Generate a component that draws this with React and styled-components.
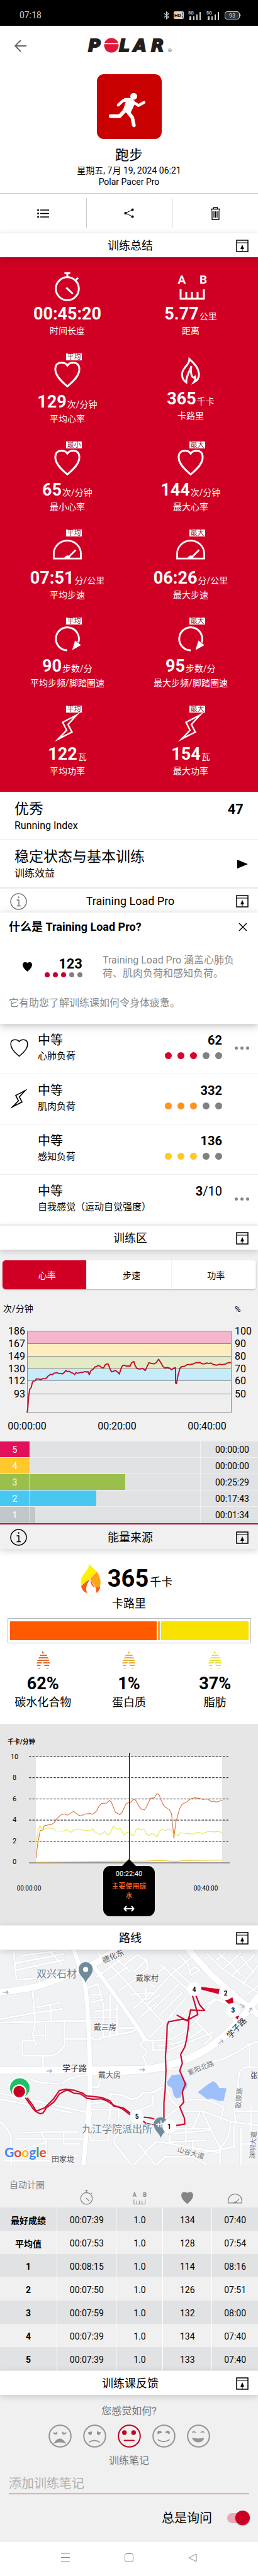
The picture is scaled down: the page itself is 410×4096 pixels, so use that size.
import { useState } from 'react';
import styled, { createGlobalStyle } from 'styled-components';

const GlobalStyle = createGlobalStyle`
  * {
    box-sizing: border-box;
  }

  body {
    margin: 0;
    background: #fff;
    color: #000;
    font-family: Roboto, 'Noto Sans CJK SC', sans-serif;
    font-size: 14px;
  }

  button, input {
    font-family: inherit;
    color: inherit;
  }

  svg {
    display: block;
  }
`;

const IconButton = styled.button`
  display: flex;
  align-items: center;
  justify-content: center;
  padding: 0;
  border: none;
  background: none;
  color: ${({ $color }) => $color || 'inherit'};
  cursor: pointer;
`;

/* ---------- top of the page ---------- */

const StatusBar = styled.div`
  display: flex;
  align-items: center;
  justify-content: space-between;
  height: 41px;
  padding: 7px 27px 0 31px;
  background: #000;
  color: #d0d0d0;
  font-size: 14px;
`;

const StatusIcons = styled.div`
  display: flex;
  align-items: center;
  gap: 7px;
`;

const AppBar = styled.header`
  display: grid;
  grid-template-columns: 40px 1fr 40px;
  align-items: center;
  justify-items: center;
  height: 63px;
  padding: 0 12px;
`;

const Hero = styled.section`
  display: flex;
  flex-direction: column;
  align-items: center;
  padding: 14px 0 9px;
`;

const SportTile = styled.div`
  width: 103px;
  height: 103px;
  margin-bottom: 11px;
  border-radius: 11px;
  background: #c80000;
`;

const SportName = styled.h1`
  margin: 0;
  font-size: 22px;
  font-weight: 400;
  line-height: 30px;
`;

const HeroLine = styled.div`
  line-height: 18px;
`;

const Toolbar = styled.div`
  display: grid;
  grid-template-columns: repeat(3, 1fr);
  height: 63px;
  padding: 7px 0;
  border-top: 1px solid #ccc;
`;

const ToolButton = styled(IconButton)`
  & + & {
    border-left: 1px solid #ccc;
  }
`;

const SectionBar = styled.header`
  position: relative;
  z-index: 1;
  display: grid;
  grid-template-columns: 40px 1fr 40px;
  align-items: center;
  justify-items: center;
  height: ${({ $accent }) => ($accent ? 41 : 39)}px;
  padding: 2px 5px 0 9px;
  border-top: ${({ $accent }) => ($accent ? '2px solid #b5122f' : '1px solid #ececec')};
  background: ${({ $accent }) => ($accent ? '#f0f0f0' : '#fff')};
  box-shadow: ${({ $flat }) => ($flat ? 'none' : '0 3px 10px rgba(0, 0, 0, 0.16)')};
`;

const SectionTitle = styled.h2`
  grid-column: 2;
  margin: 0;
  font-size: 18px;
  font-weight: 400;
  line-height: 24px;
`;

/* ---------- summary ---------- */

const Summary = styled.section`
  display: grid;
  grid-template-columns: 1fr 1fr;
  row-gap: 26px;
  padding: 13px 9px 23px;
  background: #d00024;
  color: #fff;
`;

const Metric = styled.div`
  display: flex;
  flex-direction: column;
  align-items: center;
`;

const MetricIcon = styled.div`
  position: relative;
  width: 48px;
  height: ${({ $short }) => ($short ? 52 : 57)}px;
  margin-bottom: 3px;
`;

const Badge = styled.span`
  position: absolute;
  top: 0;
  right: 1px;
  width: 25px;
  height: 11px;
  background: #fff;
  color: #8c1c38;
  font-size: 11px;
  line-height: 11px;
  text-align: center;
`;

const MetricValue = styled.div`
  display: flex;
  align-items: baseline;
  height: 34px;
  font-size: 27px;
  font-weight: 700;
  line-height: 34px;

  small {
    padding-left: 1px;
    font-size: 14px;
    font-weight: 400;
    line-height: 20px;
  }
`;

const MetricLabel = styled.div`
  line-height: 20px;
`;

/* ---------- running index and training load ---------- */

const InfoRow = styled.section`
  display: flex;
  align-items: center;
  justify-content: space-between;
  padding: 13px ${({ $end }) => $end}px 10px 23px;
  border-bottom: ${({ $line }) => $line}px solid #ececec;

  h3 {
    margin: 0;
    font-size: 23px;
    font-weight: 400;
    line-height: 30px;
  }

  p {
    margin: 0;
    font-size: 16px;
    line-height: 22px;
  }

  strong {
    align-self: flex-start;
    font-size: 22px;
    line-height: 30px;
  }
`;

const LoadIntro = styled.section`
  position: relative;
  z-index: 1;
  padding: 11px 14px 22px;
  background: #fff;
  box-shadow: 0 3px 12px rgba(0, 0, 0, 0.25);
`;

const IntroHead = styled.div`
  display: flex;
  align-items: center;
  justify-content: space-between;
  padding-right: 3px;
  font-size: 18px;
  font-weight: 700;
  line-height: 24px;
`;

const IntroBody = styled.div`
  display: flex;
  align-items: center;
  margin: 30px 0 26px;
  padding: 0 20px 0 22px;
`;

const IntroScore = styled.div`
  display: flex;
  flex-direction: column;
  align-items: flex-end;
  margin: 0 32px 0 20px;
  font-size: 22px;
  font-weight: 700;
  line-height: 26px;
`;

const GrayText = styled.p`
  flex: 1;
  margin: 0;
  color: #8a8a8a;
  font-size: 16px;
  line-height: ${({ $line }) => $line || 22}px;
`;

const Dots = styled.div`
  display: flex;
  gap: ${({ $small }) => ($small ? 5 : 9)}px;
`;

const Dot = styled.span`
  width: ${({ $small }) => ($small ? 8 : 11)}px;
  height: ${({ $small }) => ($small ? 8 : 11)}px;
  border-radius: 50%;
  background: ${({ $color }) => $color};
`;

const LoadRow = styled.div`
  display: grid;
  grid-template-columns: 60px 1fr auto 57px;
  height: 80px;
  padding-top: 13px;
  border-bottom: 1px solid #f0f0f0;
`;

const LoadIcon = styled.div`
  display: flex;
  justify-content: center;
  height: 51px;
  align-items: center;
`;

const LoadName = styled.div`
  font-size: 20px;
  line-height: 26px;

  p {
    margin: 0;
    font-size: 15px;
    line-height: 24px;
  }
`;

const LoadScore = styled.div`
  display: flex;
  flex-direction: column;
  align-items: flex-end;
  gap: 6px;
  font-size: 20px;
  line-height: 26px;
`;

const MoreButton = styled(IconButton)`
  gap: 4px;
  height: 51px;
  padding-left: 5px;

  span {
    width: 5px;
    height: 5px;
    border-radius: 50%;
    background: #858585;
  }
`;

/* ---------- zones ---------- */

const Zones = styled.section`
  padding-top: 17px;
  background: #f0f0f0;
`;

const Tabs = styled.div`
  display: grid;
  grid-template-columns: repeat(3, 1fr);
  height: 46px;
  margin: 0 3px 0 4px;
  overflow: hidden;
  border-radius: 5px;
  background: #fff;
  box-shadow: 0 1px 2px rgba(0, 0, 0, 0.25);
`;

const Tab = styled.button`
  padding: 0 0 0 8px;
  border: none;
  border-right: 1px solid #f0f0f0;
  background: ${({ $active }) => ($active ? '#d00024' : '#fff')};
  color: ${({ $active }) => ($active ? '#fff' : '#000')};
  font-size: 14px;
`;

const Chart = styled.svg`
  width: 100%;
  height: auto;
`;

const ZoneTable = styled.table`
  width: 100%;
  border-collapse: separate;
  border-spacing: 0;
  table-layout: fixed;
  background: #e1e2e4;

  tr {
    height: 26px;
  }

  th, td {
    padding: 0;
    border-bottom: 1px solid #f0f0f0;
  }

  th {
    width: 48px;
    border-right: 1px solid #f0f0f0;
    color: #fff;
    font-weight: 400;
  }

  td:last-child {
    width: 92px;
    padding-right: 14px;
    border-left: 1px solid #f0f0f0;
    text-align: right;
  }
`;

const ZoneLabel = styled.div`
  height: 25px;
  background: ${({ $color }) => $color};
  line-height: 26px;
`;

const ZoneBar = styled.div`
  height: 25px;
  background: ${({ $color }) => $color};
`;

/* ---------- energy ---------- */

const Energy = styled.section`
  padding: 23px 0 22px;
  text-align: center;
`;

const EnergyTotal = styled.div`
  display: flex;
  align-items: center;
  justify-content: center;
  height: 48px;
  margin-bottom: 4px;
  padding-right: 8px;

  strong {
    padding-left: 11px;
    font-size: 38px;
    line-height: 48px;
  }

  span {
    padding: 11px 0 0 2px;
    font-size: 18px;
    line-height: 24px;
  }
`;

const Nutrient = styled.div`
  font-size: 18px;
  line-height: 24px;

  strong {
    display: block;
    margin: 6px 0 2px;
    font-size: 27px;
    line-height: 32px;
  }

  svg {
    margin: 0 auto;
  }
`;

const EnergyBar = styled.div`
  display: flex;
  gap: 2px;
  height: 40px;
  margin: 11px 11px 12px 12px;
  padding: 4px 3px;
  border: 1px solid #b9b9c0;
`;

const EnergyPart = styled.div`
  background: ${({ $color }) => $color};
`;

const Nutrients = styled.div`
  display: grid;
  grid-template-columns: repeat(3, 1fr);
`;

const EnergyChart = styled.section`
  position: relative;
  background: #e6e6e6;
`;

const Tooltip = styled.div`
  position: absolute;
  top: 226px;
  left: 50%;
  width: 82px;
  height: 80px;
  padding: 5px 12px;
  border-radius: 11px;
  background: #000;
  color: #ff6424;
  font-size: 11px;
  font-weight: 500;
  line-height: 15px;
  text-align: center;
  transform: translateX(-50%);

  &::before {
    content: '';
    position: absolute;
    top: -11px;
    left: 30px;
    border: 11px solid transparent;
    border-top-width: 0;
    border-bottom-color: #000;
  }

  time {
    display: block;
    margin-bottom: 5px;
    color: #fff;
    font-weight: 400;
  }

  svg {
    margin: 8px auto 0;
  }
`;

/* ---------- laps ---------- */

const LapTable = styled.table`
  width: 100%;
  border-collapse: separate;
  border-spacing: 0;
  table-layout: fixed;
  background: #f0f0f0;
  text-align: center;

  thead tr {
    height: 68px;
  }

  thead th {
    padding: 0 0 4px;
    color: #858585;
    font-weight: 400;
    vertical-align: bottom;
  }

  thead th:first-child {
    padding: 22px 0 0 15px;
    line-height: 20px;
    text-align: left;
    vertical-align: top;
  }

  thead svg {
    margin: 0 auto;
  }

  tbody tr {
    height: 37px;
  }

  tbody tr:nth-child(odd) {
    background: #e1e2e4;
  }

  tbody th, tbody td {
    padding: 2px 0 0;
  }

  tbody td {
    border-left: 1px solid #fff;
  }
`;

/* ---------- feedback ---------- */

const Feedback = styled.section`
  padding: 15px 14px 26px;
  background: #f0f0f0;
  text-align: center;
`;

const FeedbackLabel = styled.label`
  display: block;
  color: #777;
  font-size: 16px;
  line-height: 22px;
`;

const Faces = styled.div`
  display: flex;
  justify-content: center;
  gap: 18px;
  margin: 10px 0;
`;

const NoteInput = styled.input`
  display: block;
  width: 100%;
  height: 33px;
  margin-top: 9px;
  padding: 0;
  border: none;
  border-bottom: 1px solid #a81c3c;
  outline: none;
  background: none;
  font-size: 20px;

  &::placeholder {
    color: #b0b0b0;
  }
`;

const AskRow = styled.label`
  display: flex;
  align-items: center;
  justify-content: flex-end;
  gap: 24px;
  margin-top: 26px;
  padding-right: 3px;
  font-size: 20px;
  line-height: 24px;
`;

const Switch = styled.input`
  position: relative;
  width: 32px;
  height: 16px;
  margin: 0;
  border-radius: 8px;
  background: ${({ checked }) => (checked ? '#e8aab6' : '#bbb')};
  appearance: none;

  &::before {
    content: '';
    position: absolute;
    top: -4px;
    ${({ checked }) => (checked ? 'right' : 'left')}: -4px;
    width: 23px;
    height: 23px;
    border-radius: 50%;
    background: ${({ checked }) => (checked ? '#cc0024' : '#fff')};
    box-shadow: 0 1px 2px rgba(0, 0, 0, 0.3);
  }
`;

const NavBar = styled.nav`
  display: flex;
  justify-content: center;
  gap: 87px;
  height: 54px;
  padding-bottom: 5px;
`;

/* ---------- icons ---------- */

function Heart({ width, height, viewBox = '12 48 152 152', stroke = 11, filled }) {
  return (
    <svg width={width} height={height} viewBox={viewBox}>
      <path
        d="M88 192C70 176 18 138 18 92C18 62 36 54 52 54C72 54 84 60 88 72C92 60 104 54 124 54C140 54 158 62 158 92C158 138 106 176 88 192Z"
        fill={filled ? 'currentColor' : 'none'}
        stroke="currentColor"
        strokeWidth={stroke}
        strokeLinejoin="round"
      />
    </svg>
  );
}

function Stopwatch({ width, height, viewBox = '12 38 152 172', stroke = 11 }) {
  return (
    <svg width={width} height={height} viewBox={viewBox} fill="none" stroke="currentColor" strokeWidth={stroke}>
      <circle cx="88" cy="136" r="67" />
      <path d="M71 45H105M88 45V68M138 84L151 73M82 130L120 166" />
    </svg>
  );
}

function Ruler({ width, height, viewBox = '-2 6 54 50', stroke = 3 }) {
  return (
    <svg width={width} height={height} viewBox={viewBox}>
      <path d="M8 38V53H45V38M17 42V53M26 42V53M35 42V53" fill="none" stroke="currentColor" strokeWidth={stroke} />
      <g fill="currentColor" fontSize="19" fontWeight="700" textAnchor="middle">
        <text x="10" y="29">A</text>
        <text x="44" y="29">B</text>
      </g>
    </svg>
  );
}

function Gauge({ width, height, viewBox = '309 25 168 112', stroke = 10 }) {
  return (
    <svg width={width} height={height} viewBox={viewBox}>
      <path
        d="M314 132V104A79 76 0 0 1 472 104V132ZM396 128L442 82"
        fill="none"
        stroke="currentColor"
        strokeWidth={stroke}
      />
      <path d="M374 132Q380 114 395 114Q408 116 410 132Z" fill="currentColor" />
    </svg>
  );
}

function Cadence() {
  return (
    <svg width="48" height="57" viewBox="305 475 176 209">
      <path d="M393 666A67 67 0 1 1 457 620" fill="none" stroke="currentColor" strokeWidth="11" />
      <path d="M438 609L473 635L421 665Z" fill="currentColor" />
    </svg>
  );
}

function Bolt({ width, height, viewBox = '318 1026 150 174' }) {
  return (
    <svg width={width} height={height} viewBox={viewBox}>
      <path
        d="M447 1043L366 1085L389 1131L341 1182L420 1142L397 1098Z"
        fill="none"
        stroke="currentColor"
        strokeWidth="9"
        strokeMiterlimit="10"
      />
      <path d="M464 1030L436 1044L440 1052ZM322 1197L352 1181L344 1172Z" fill="currentColor" />
    </svg>
  );
}

function FlameOutline() {
  return (
    <svg width="48" height="52" viewBox="0 0 48 52" fill="none" stroke="currentColor" strokeWidth="3">
      <path d="M17 46C9 41 9 31 13 25C17 19 22 16 22 9C29 15 36 22 37 31C38 38 35 43 29 46C31 43 32 40 31 37C28 40 23 38 25 20C24 27 17 33 17 46Z" />
    </svg>
  );
}

function FlameColor() {
  return (
    <svg width="32" height="48" viewBox="0 0 32 48">
      <path d="M26 13C31 20 33 29 31 36C30 42 28 45 26 47C26 44 25 41 24 38L15 24Z" fill="#ffa514" />
      <path d="M13 0C16 5 23 9 26 13L9 29Q4 34 1 34C-1 26 3 19 8 13C12 8 14 5 13 0Z" fill="#fff200" />
      <path d="M15 25C9 28 4 33 1 36C2 42 6 46 11 47C7 41 9 35 15 25ZM16 25C15 32 19 38 24 38C25 42 25 44 24 47C28 45 31 42 31 37C27 39 22 38 20 34Z" fill="#ff5a14" />
    </svg>
  );
}

function StripedFlame({ color }) {
  const stripes = [
    'M9 0L13 4H9Z',
    'M6 6H16L17 8H5Z',
    'M4 10H18L19 12H3Z',
    'M2 14H20V16H1Z',
    'M1 18H9L8 20H0ZM11 18H21V20H10Z',
    'M1 22H7L6 24H1ZM11 22H20V24H13Z',
    'M2 27H4L6 29H5ZM16 27H19L16 29Z',
  ];
  return (
    <svg width="21" height="30" viewBox="0 0 21 30" fill={color}>
      {stripes.map((d) => (
        <path key={d} d={d} />
      ))}
    </svg>
  );
}

function CollapseButton() {
  return (
    <IconButton type="button" aria-label="收起">
      <svg width="20" height="20" viewBox="0 0 20 20" fill="none" stroke="currentColor">
        <path d="M1 1H19V19H1Z" strokeWidth="1.5" />
        <path d="M1 5H19M10 13V19" />
        <path d="M10 8L13 15H7Z" fill="currentColor" stroke="none" />
      </svg>
    </IconButton>
  );
}

function InfoButton({ color }) {
  return (
    <IconButton type="button" aria-label="信息" $color={color}>
      <svg width="27" height="27" viewBox="0 0 27 27" fill="none" stroke="currentColor" strokeWidth="1.5">
        <circle cx="13.5" cy="13.5" r="12.5" />
        <path d="M10.5 11H14V20M10.5 20.5H17" />
        <circle cx="13.6" cy="6.5" r="1.2" fill="currentColor" stroke="none" />
      </svg>
    </IconButton>
  );
}

function PolarLogo() {
  return (
    <svg width="138" height="38" viewBox="0 -7 138 38">
      <g
        fill="#231f20"
        stroke="#231f20"
        strokeWidth="2"
        fontFamily="'DejaVu Sans', sans-serif"
        fontWeight="700"
        fontStyle="italic"
        fontSize="27"
      >
        <text x="4" y="21">P</text>
        <text x="53" y="21">L</text>
        <text x="76" y="21">A</text>
        <text x="104" y="21">R</text>
      </g>
      <circle cx="41" cy="11" r="11.500" fill="#e0163c" />
      <path d="M29 8.500H53" stroke="#fff" strokeWidth="1.500" />
      <circle cx="134" cy="19" r="2.500" fill="none" stroke="#555" strokeWidth="0.600" />
      <text x="134" y="21" fontSize="4" textAnchor="middle" fill="#555">R</text>
    </svg>
  );
}

function Runner() {
  return (
    <svg width="103" height="103" viewBox="563 432 375 375" fill="none" stroke="#fff" strokeLinecap="round" strokeLinejoin="round">
      <circle cx="776" cy="560" r="20" fill="#fff" stroke="none" />
      <path d="M686 611L714 585H750M766 588L803 613L836 595" strokeWidth="16" />
      <path d="M728 580H756L775 596L746 655L768 683L777 728" strokeWidth="21" />
      <path d="M643 675H694L722 645" strokeWidth="22" />
      <path d="M740 584L766 594L740 650L720 644Z" fill="#fff" strokeWidth="14" />
    </svg>
  );
}

function Signal() {
  return (
    <svg width="22" height="20" viewBox="0 -4 22 20" fill="#d0d0d0">
      <text x="0" y="5" fontSize="7" fontWeight="700">5G</text>
      <path d="M2 8H5V14H2ZM8 8H10V14H8ZM13 5H15V14H13ZM18 1H20V14H18Z" />
    </svg>
  );
}

function Face({ mood }) {
  const eyes = {
    awful: 'M7 12Q11 15 14 11Q15 17 11 16Q8 16 7 12ZM29 12Q25 15 22 11Q21 17 25 16Q28 16 29 12Z',
    bad: 'M8 12Q11 13 13 10Q16 16 11 17Q8 16 8 12ZM28 12Q25 13 23 10Q20 16 25 17Q28 16 28 12Z',
    ok: 'M7 13A3.7 3.7 0 1 0 14.4 13A3.7 3.7 0 1 0 7 13ZM21.6 13A3.7 3.7 0 1 0 29 13A3.7 3.7 0 1 0 21.6 13Z',
    good: 'M8 13A3.5 3.5 0 1 1 15 14Q12 13 9 16ZM28 13A3.5 3.5 0 1 0 21 14Q24 13 27 16Z',
    great: 'M8 14Q9 8 14 12L15 14Q11 11 8 14ZM28 14Q27 8 22 12L21 14Q25 11 28 14Z',
  };
  const mouths = {
    awful: <path d="M10 29Q18 18 26 29Q18 26 10 29Z" fill="currentColor" />,
    bad: <path d="M10 28Q18 23 26 28" fill="none" />,
    ok: <path d="M10.5 25.5H26" fill="none" />,
    good: <path d="M9.5 24.5Q18 30 27 24.5" fill="none" />,
    great: <path d="M9 22Q18 24 27 22Q25 28 18 28Q11 28 9 22Z" fill="currentColor" strokeWidth="1" />,
  };
  return (
    <svg width="37" height="37" viewBox="0 0 37 37" stroke="currentColor" strokeWidth="1.8" strokeLinecap="round">
      <circle cx="18.5" cy="18.5" r="17.3" fill="none" strokeWidth="2" />
      <path d={eyes[mood]} fill="currentColor" stroke="none" />
      {mouths[mood]}
    </svg>
  );
}

/* ---------- data ---------- */

const METRIC_BOX = { width: 48, height: 57 };
const heartIcon = <Heart {...METRIC_BOX} viewBox="0 0 176 209" />;
const gaugeIcon = <Gauge {...METRIC_BOX} viewBox="305 -37 176 209" />;
const boltIcon = <Bolt {...METRIC_BOX} viewBox="305 988 176 209" />;

const METRICS = [
  { icon: <Stopwatch {...METRIC_BOX} viewBox="0 0 176 209" />, value: '00:45:20', label: '时间长度' },
  { icon: <Ruler width={52} height={57} viewBox="0 0 52 57" />, value: '5.77', unit: '公里', label: '距离' },
  { icon: heartIcon, badge: '平均', value: '129', unit: '次/分钟', label: '平均心率' },
  { icon: <FlameOutline />, short: true, value: '365', unit: '千卡', label: '卡路里' },
  { icon: heartIcon, badge: '最小', value: '65', unit: '次/分钟', label: '最小心率' },
  { icon: heartIcon, badge: '最大', value: '144', unit: '次/分钟', label: '最大心率' },
  { icon: gaugeIcon, badge: '平均', value: '07:51', unit: '分/公里', label: '平均步速' },
  { icon: gaugeIcon, badge: '最大', value: '06:26', unit: '分/公里', label: '最大步速' },
  { icon: <Cadence />, badge: '平均', value: '90', unit: '步数/分', label: '平均步频/脚踏圈速' },
  { icon: <Cadence />, badge: '最大', value: '95', unit: '步数/分', label: '最大步频/脚踏圈速' },
  { icon: boltIcon, badge: '平均', value: '122', unit: '瓦', label: '平均功率' },
  { icon: boltIcon, badge: '最大', value: '154', unit: '瓦', label: '最大功率' },
];

const LOADS = [
  { icon: <Heart width={29} height={29} stroke={8} />, name: '心肺负荷', score: '62', color: '#d90429', more: true },
  { icon: <Bolt width={28} height={32} />, name: '肌肉负荷', score: '332', color: '#ff931e' },
  { name: '感知负荷', score: '136', color: '#ffc828' },
  { name: '自我感觉（运动自觉强度）', score: '3', outOf: '/10', more: true },
];

const HR_BANDS = [
  { bpm: 186, pct: 100, y: 66, h: 20, color: '#f4b6cd' },
  { bpm: 167, pct: 90, y: 86, h: 20, color: '#ffecbe' },
  { bpm: 149, pct: 80, y: 106, h: 20, color: '#e2eac6' },
  { bpm: 130, pct: 70, y: 126, h: 19, color: '#c6ebfa' },
  { bpm: 112, pct: 60, y: 145, h: 21, color: '#ededed' },
  { bpm: 93, pct: 50, y: 166, h: 30, color: '#efefef' },
];

const HR_LINE =
  '157,1018 161,1000 166,930 172,885 176,878 182,870 188,842 194,833 203,833 212,821 224,822 236,825 250,820 262,820 270,817 282,803 294,795 304,797 316,788 330,785 340,789 352,790 364,792 372,785 384,772 390,779 402,777 414,785 424,788 434,797 442,785 452,789 466,784 480,784 494,779 504,782 512,779 519,797 528,774 540,766 552,752 562,750 570,743 582,748 592,756 602,757 612,739 622,734 630,736 638,760 648,780 660,777 670,772 684,782 694,793 704,760 712,745 722,742 734,747 746,746 756,748 766,727 778,720 786,745 796,760 808,764 820,763 830,760 844,773 852,757 866,727 878,731 896,734 908,727 922,707 934,725 948,750 960,758 972,755 986,759 998,768 1008,760 1020,756 1021,846 1026,849 1034,805 1046,760 1056,750 1074,748 1088,738 1104,738 1122,735 1140,727 1162,726 1176,734 1190,734 1202,729 1214,732 1226,729 1240,738 1260,742 1276,736 1290,739 1312,735 1326,727 1345,727';

const ZONES = [
  { zone: 5, color: '#e20f5d', width: 0, time: '00:00:00' },
  { zone: 4, color: '#ffc82d', width: 0, time: '00:00:00' },
  { zone: 3, color: '#9bbf4b', width: 56, time: '00:25:29' },
  { zone: 2, color: '#48c7f0', width: 39, time: '00:17:43' },
  { zone: 1, color: '#c2c8c9', width: 3, time: '00:01:34' },
];

const NUTRIENTS = [
  { name: '碳水化合物', pct: 62, color: '#ff5a00', flame: '#e06a2c' },
  { name: '蛋白质', pct: 1, color: '#f5a61e', flame: '#e8ae38' },
  { name: '脂肪', pct: 37, color: '#f7e200', flame: '#e8e23c' },
];

const CARB_LINE =
  '210,848 216,790 222,750 234,688 247,687 258,661 275,657 300,653 315,643 330,620 355,597 378,592 391,600 412,587 428,577 445,590 458,600 474,604 488,593 525,590 538,595 562,575 575,548 590,531 620,529 635,514 646,521 658,550 671,582 695,597 710,583 732,535 745,527 756,527 778,506 790,514 806,545 822,565 840,569 852,550 875,501 898,498 913,473 925,481 938,515 952,543 965,555 985,567 997,590 1004,655 1011,734 1022,640 1045,560 1060,535 1085,523 1106,506 1130,498 1155,501 1180,508 1205,505 1230,520 1245,518 1254,523 1270,520 1293,512';

const FAT_LINE =
  '210,770 215,730 221,690 233,660 246,688 262,680 280,673 294,679 308,677 325,692 360,693 390,684 415,699 428,686 460,680 490,688 527,690 538,678 550,695 570,707 588,711 610,694 622,710 634,716 647,690 659,662 670,675 684,682 696,672 708,693 720,716 737,700 752,697 768,716 780,716 792,683 804,676 820,684 840,681 852,710 866,719 882,705 894,711 912,727 925,700 938,681 964,688 975,681 994,684 1011,715 1022,710 1036,718 1048,702 1090,706 1125,711 1150,698 1175,706 1214,694 1250,697 1270,694 1293,702';

const ROADS_MAJOR = [
  ['M0 427C150 412 230 396 300 365C400 327 460 310 560 255C620 215 670 185 720 160', 38],
  ['M0 882L830 878C1000 860 1130 810 1230 740C1330 670 1400 590 1500 455', 42],
  ['M1095 180L1230 330L1400 480L1500 555', 36],
  ['M545 275C640 410 740 540 810 650L840 700', 24],
  ['M425 170L488 350C515 500 520 700 522 880V1000C515 1150 495 1300 485 1440', 26],
];

const ROADS_MINOR = [
  'M80 200L95 355L230 345L390 310M90 300L370 240M85 260L370 205M300 200L360 270M120 215L320 190M230 345V380',
  'M190 425L205 600L190 680L210 735M0 585L190 550L360 525M0 605L200 600L370 595H510M215 515L350 490M290 500L300 590M375 600V740Q330 800 280 798H130V710H190M195 680H265M265 610V710M375 700H510M250 800V870',
  'M510 400L570 380L600 500V690Q550 720 535 690M530 440H590M535 485L600 470M540 575H680M545 540L680 525M600 640L780 635M600 690L760 660L800 640M640 440V690M680 500V670',
  'M570 200L700 330L850 500L1000 660M560 340L700 240M630 360L740 280M640 200L760 310M690 420L820 330M760 440L900 430M850 400V470M780 310L850 240L860 290L780 340M720 270L800 210L860 250M820 330L900 400',
  'M930 265L1100 420L1180 520M900 330L960 280M860 470L990 330L1060 270L1120 220M900 520L1040 380M930 560L1060 430M960 600L1080 460M850 500L930 440M1000 640L1100 520M870 690L1000 560M780 520L870 440M820 570L910 490M1000 280L1130 400M1040 210L1090 260L1110 330L1160 300Q1130 270 1110 300',
  'M840 710H900L1000 700Q1120 640 1240 480Q1330 440 1370 620M890 710V765H980L1240 660M1140 600L1230 690L1190 730M920 740Q1080 730 1180 640M860 700Q800 720 830 750Q880 780 830 800L850 850M1180 520L1250 465L1300 490',
  'M1200 200L1290 290L1500 430M1260 240L1310 200M1300 290L1400 200M1350 330L1480 210M1410 380L1500 270M1270 200L1360 280L1400 330M1440 440L1500 390M1400 220L1480 320',
  'M530 980H570L590 910M640 1020Q720 1020 760 1050Q810 1050 830 1010Q900 1020 940 980Q980 990 990 1050L1040 1100L960 1160M640 1020V1160M520 1080L640 1060M890 1030V1080Q800 1120 760 1130M530 1110H690V1160',
  'M360 960Q420 910 510 910M180 930Q210 960 345 960M0 1015L430 1110L520 1130M0 1050L420 1130M510 905Q700 910 880 890Q1000 870 1070 880',
  'M0 1180Q70 1240 65 1300V1430M130 1245L455 1240M90 1280H500M240 1245L270 1300V1400M370 1245V1310H460M140 1340L270 1300M110 1380H450M530 1130Q510 1280 530 1290H630V1160M20 1410H290',
  'M740 1210Q660 1260 660 1300L760 1430M840 1360L910 1295L1100 1330L1280 1360M805 1310L900 1430M840 1370L780 1430M910 1430L960 1385H1120L1200 1430',
  'M1080 1060Q1200 1030 1300 1100L1280 1180M1070 1120H1180L1340 1180L1500 1200M1160 1130L1120 1220M960 1220H1220M990 1300L980 1180M1080 1180V1300M1120 1290V1340M1180 1130Q1240 1260 1280 1330V1430M1340 1180Q1340 1280 1280 1330M1180 1360L1350 1330M1010 1250L1230 1230M980 1300L1200 1290',
  'M1380 1000L1390 900Q1400 870 1430 865H1500M1240 830Q1320 820 1450 730L1500 715M1450 730V860M1460 1090V1300M1370 1190L1360 1100M1370 1120H1500M1400 1310H1460M1360 1200V1330M1400 1220V1430',
];

const ROUTE = [
  'M150 1045L175 1080Q200 1125 235 1135L250 1130L270 1100L315 1065L345 1020L390 995L430 1015L470 1020L505 1045L540 1050L590 1048L625 1062L660 1085L710 1105L755 1140',
  'M160 1045L190 1085L210 1120L260 1100L310 1050L345 1000L380 992L430 998L480 1015L500 1030L590 1040L640 1060L660 1090L715 1100L755 1130',
  'M835 1155L870 1158L895 1165M835 1180L850 1192L890 1198',
  'M953 1160V1070L960 1000L965 880L962 800L970 690L972 620L980 600L1060 585L1090 590L1150 558L1140 520L1120 450',
  'M1030 562L1090 595L1100 570L1108 532L1190 535L1160 500L1140 450',
  'M1100 570L1095 630L1085 700L1075 745L1050 790L1060 840L1045 885L1078 960L1060 1010L1068 1068L1045 1095L1072 1160L1075 1195L1025 1203',
];

const MARKERS = [
  [4, 1129, 410],
  [2, 1312, 433],
  [3, 1355, 534],
  [5, 796, 1150],
  [1, 984, 1208],
];

const PLACES = [
  { text: '双兴石材', x: 58, y: 44, size: 16, color: '#6d8794' },
  { text: '九江学院派出所', x: 130, y: 291, size: 16, color: '#6d8794' },
  { text: '戴家村', x: 216, y: 50, size: 12, color: '#555' },
  { text: '戴三房', x: 149, y: 128, size: 12, color: '#555' },
  { text: '戴大房', x: 156, y: 204, size: 12, color: '#555' },
  { text: '学子路', x: 99, y: 193, size: 13, color: '#333' },
  { text: '学子路', x: 366, y: 142, size: 13, color: '#333', rotate: -47 },
  { text: '德化东', x: 165, y: 22, size: 12, color: '#555', rotate: -24 },
  { text: '紫阳北路', x: 300, y: 200, size: 11, color: '#777', rotate: -22 },
  { text: '散原路', x: 382, y: 253, size: 11, color: '#777', rotate: -85 },
  { text: '渊明大道', x: 405, y: 333, size: 11, color: '#777', rotate: -87 },
  { text: '山谷大道', x: 281, y: 321, size: 11, color: '#777', rotate: 16 },
  { text: '张', x: 398, y: 205, size: 12, color: '#333' },
  { text: '田家垅', x: 82, y: 338, size: 12, color: '#555' },
];

const LAPS = [
  ['最好成绩', '00:07:39', '1.0', '134', '07:40'],
  ['平均值', '00:07:53', '1.0', '128', '07:54'],
  ['1', '00:08:15', '1.0', '114', '08:16'],
  ['2', '00:07:50', '1.0', '126', '07:51'],
  ['3', '00:07:59', '1.0', '132', '08:00'],
  ['4', '00:07:39', '1.0', '134', '07:40'],
  ['5', '00:07:39', '1.0', '133', '07:40'],
];

const MOODS = ['awful', 'bad', 'ok', 'good', 'great'];

/* ---------- sections ---------- */

function Section({ title, info, accent, flat }) {
  return (
    <SectionBar $accent={accent} $flat={flat}>
      {info && <InfoButton color={info} />}
      <SectionTitle>{title}</SectionTitle>
      <CollapseButton />
    </SectionBar>
  );
}

function LoadDots({ color, small }) {
  return (
    <Dots $small={small}>
      {[0, 1, 2, 3, 4].map((i) => (
        <Dot key={i} $small={small} $color={i < 3 ? color : '#808080'} />
      ))}
    </Dots>
  );
}

function HeartRateChart() {
  return (
    <Chart viewBox="0 0 410 242">
      <text x="5" y="36" fontSize="14">次/分钟</text>
      <text x="373" y="36" fontSize="13">%</text>
      {HR_BANDS.map((band) => (
        <g key={band.bpm} fontSize="16">
          <rect x="43" y={band.y} width="325" height={band.h} fill={band.color} />
          <path d={`M43 ${band.y + 0.5}H368`} stroke="#888" />
          <text x="40" y={band.y + 6} textAnchor="end">{band.bpm}</text>
          <text x="373" y={band.y + 6}>{band.pct}</text>
        </g>
      ))}
      <path d="M43.5 66V196H367.5V66" fill="none" stroke="#888" />
      <g transform="translate(0 -82) scale(0.27333)">
        <polyline points={HR_LINE} fill="none" stroke="#c01030" strokeWidth="7" strokeLinejoin="round" />
      </g>
      <g fontSize="16" textAnchor="middle">
        <text x="43" y="223">00:00:00</text>
        <text x="186" y="223">00:20:00</text>
        <text x="329" y="223">00:40:00</text>
      </g>
    </Chart>
  );
}

function EnergyUse() {
  return (
    <EnergyChart>
      <Chart viewBox="0 0 410 320">
        <text x="12" y="32" fontSize="10" fontWeight="700">千卡/分钟</text>
        <rect x="57" y="52" width="296" height="169" fill="#fff" />
        {[10, 8, 6, 4, 2].map((n, i) => (
          <path key={n} d={`M46 ${52 + i * 33.7}H363`} stroke="#111" strokeDasharray="3.6 2" />
        ))}
        <g fontSize="11" textAnchor="middle">
          {[10, 8, 6, 4, 2, 0].map((n, i) => (
            <text key={n} x="23" y={56 + i * 33.4}>{n}</text>
          ))}
        </g>
        <path d="M46 221H365" stroke="#999" strokeWidth="2" />
        <g transform="translate(0 -18.6) scale(0.27333)" fill="none" strokeWidth="4" strokeLinejoin="round">
          <polyline points={CARB_LINE} stroke="#d9703c" />
          <polyline points={FAT_LINE} stroke="#e6e650" />
          <polyline points="210,873 400,871 640,867 850,866 930,863 1015,868 1100,863 1293,861" stroke="#ecc030" />
        </g>
        <path d="M205.5 46V222" stroke="#000" />
        <g fontSize="10" textAnchor="middle">
          <text x="46" y="265">00:00:00</text>
          <text x="327" y="265">00:40:00</text>
        </g>
      </Chart>
      <Tooltip>
        <time>00:22:40</time>
        主要使用碳水
        <svg width="18" height="10" viewBox="0 0 18 10" fill="none" stroke="#fff" strokeWidth="2">
          <path d="M2 5H16M5 1L1.5 5L5 9M13 1L16.5 5L13 9" />
        </svg>
      </Tooltip>
    </EnergyChart>
  );
}

function RouteMap() {
  return (
    <Chart viewBox="0 0 410 342">
      <rect width="410" height="342" fill="#f1f2f4" />
      <g transform="translate(0 -49.2) scale(0.27333)" fill="none" strokeLinecap="round" strokeLinejoin="round">
        {ROADS_MINOR.map((d) => (
          <path key={d} d={d} stroke="#dfe1e6" strokeWidth="15" />
        ))}
        {ROADS_MAJOR.map(([d, w]) => (
          <path key={d} d={d} stroke="#dfe1e6" strokeWidth={w + 5} />
        ))}
        {ROADS_MINOR.map((d) => (
          <path key={d} d={d} stroke="#fff" strokeWidth="10" />
        ))}
        {ROADS_MAJOR.map(([d, w]) => (
          <path key={d} d={d} stroke="#fff" strokeWidth={w} />
        ))}
        <path d="M970 950L1000 910L1045 905L1065 935L1090 960L1085 985L1065 1000L1050 1040L1025 1045L1010 1030L1000 985L975 970ZM1150 1010L1200 970L1240 945L1260 960L1275 985L1317 987L1300 1060H1270L1230 1045L1205 1050Z" fill="#9dbffb" />
        <path d="M18 428H48M38 420L48 428L38 436M272 886H302M292 878L302 886L292 894M812 879H842M832 871L842 879L832 887M1272 726L1296 708M1284 706L1296 708L1294 720M1448 544L1464 520M1452 522L1464 520L1466 532M1396 496L1420 514M1408 516L1420 514L1418 502" stroke="#a9adc4" strokeWidth="5" />
        {ROUTE.map((d) => (
          <path key={d} d={d} stroke="#cc0a2e" strokeWidth="8" />
        ))}
        <path d="M1170 397L1276 410V440L1170 412ZM1308 476L1352 458L1358 490L1328 495ZM1366 568L1392 564L1380 588Z" fill="#d40029" />
        <path d="M498 374C492 345 457 330 457 294A41 41 0 0 1 539 294C539 330 504 345 498 374Z" fill="#6f8b99" />
        <circle cx="498" cy="296" r="15" fill="#fff" />
        <path d="M935 1276C929 1248 894 1232 894 1196A41 41 0 0 1 976 1196C976 1232 941 1248 935 1276Z" fill="#6f8b99" />
        <path d="M910 1198H930M920 1190V1210M936 1175V1212M936 1192H950" stroke="#fff" strokeWidth="6" />
        <circle cx="115" cy="985" r="60" fill="#22bf66" stroke="#fff" strokeWidth="6" />
        <circle cx="112" cy="1006" r="38" fill="#cc0024" stroke="#fff" strokeWidth="8" />
        {MARKERS.map(([n, x, y]) => (
          <circle key={n} cx={x} cy={y} r="40" fill="#fff" />
        ))}
      </g>
      <g fontSize="10" fontWeight="700" textAnchor="middle">
        {MARKERS.map(([n, x, y]) => (
          <text key={n} x={x * 0.27333} y={y * 0.27333 - 45.5}>{n}</text>
        ))}
      </g>
      <g paintOrder="stroke" stroke="#f8f8fa" strokeWidth="2">
        {PLACES.map((p) => (
          <text
            key={p.text + p.x}
            x={p.x}
            y={p.y}
            fontSize={p.size}
            fill={p.color}
            transform={p.rotate ? `rotate(${p.rotate} ${p.x} ${p.y})` : undefined}
          >
            {p.text}
          </text>
        ))}
        <text x="7" y="330" fontSize="21" fontFamily="Lato, sans-serif" fontWeight="700">
          <tspan fill="#4285f4">G</tspan>
          <tspan fill="#ea4335">o</tspan>
          <tspan fill="#fbbc05">o</tspan>
          <tspan fill="#4285f4">g</tspan>
          <tspan fill="#34a853">l</tspan>
          <tspan fill="#ea4335">e</tspan>
        </text>
      </g>
    </Chart>
  );
}

function App() {
  const [tab, setTab] = useState('心率');
  const [mood, setMood] = useState('ok');
  const [alwaysAsk, setAlwaysAsk] = useState(true);

  return (
    <>
      <GlobalStyle />
      <StatusBar>
        <span>07:18</span>
        <StatusIcons>
          <svg width="9" height="13" viewBox="0 0 9 13" fill="none" stroke="#d0d0d0" strokeWidth="1.2">
            <path d="M1 3.5L8 9L4.5 12V1L8 4L1 9.5" />
          </svg>
          <svg width="16" height="12" viewBox="0 0 16 12">
            <rect width="16" height="12" rx="2" fill="#d0d0d0" />
            <text x="1" y="9" fontSize="8" fontWeight="700">HD</text>
            <path d="M14 2V5M14 7V10" stroke="#000" />
          </svg>
          <Signal />
          <Signal />
          <svg width="26" height="13" viewBox="0 0 26 13">
            <rect x="0.5" y="0.5" width="23" height="12" rx="3.5" fill="#333" stroke="#d0d0d0" />
            <path d="M25 5V8" stroke="#d0d0d0" />
            <text x="12" y="10" fontSize="9" fill="#d0d0d0" textAnchor="middle">93</text>
          </svg>
        </StatusIcons>
      </StatusBar>

      <AppBar>
        <IconButton type="button" aria-label="返回" $color="#666">
          <svg width="20" height="20" viewBox="0 0 20 20" fill="none" stroke="currentColor" strokeWidth="1.8">
            <path d="M20 10H2M11 1L2 10L11 19" />
          </svg>
        </IconButton>
        <PolarLogo />
      </AppBar>

      <Hero>
        <SportTile>
          <Runner />
        </SportTile>
        <SportName>跑步</SportName>
        <HeroLine>星期五, 7月 19, 2024 06:21</HeroLine>
        <HeroLine>Polar Pacer Pro</HeroLine>
      </Hero>

      <Toolbar>
        <ToolButton type="button" aria-label="列表">
          <svg width="19" height="15" viewBox="0 0 19 15" stroke="currentColor">
            <path d="M5 2H19M5 7.5H19M5 13H19" strokeWidth="1.4" />
            <path d="M1.5 2H1.6M1.5 7.5H1.6M1.5 13H1.6" strokeWidth="2.8" strokeLinecap="round" />
          </svg>
        </ToolButton>
        <ToolButton type="button" aria-label="分享">
          <svg width="16" height="16" viewBox="0 0 16 16" stroke="currentColor">
            <path d="M14 2.5L2 8L14 13.5" fill="none" />
            <path d="M13.5 2.5H13.6M2.4 8H2.5M13.5 13.5H13.6" strokeWidth="4" strokeLinecap="round" />
          </svg>
        </ToolButton>
        <ToolButton type="button" aria-label="删除">
          <svg width="15" height="21" viewBox="0 0 15 21" fill="none" stroke="currentColor" strokeWidth="1.3">
            <path d="M0.5 6V3.5H14.5V6M4.5 3.5V1H10.5V3.5M2 6V20H13V6M5 7V17M7.5 7V17M10 7V17" />
          </svg>
        </ToolButton>
      </Toolbar>

      <Section title="训练总结" />
      <Summary>
        {METRICS.map((m) => (
          <Metric key={m.label}>
            <MetricIcon $short={m.short}>
              {m.icon}
              {m.badge && <Badge>{m.badge}</Badge>}
            </MetricIcon>
            <MetricValue>
              {m.value}
              {m.unit && <small>{m.unit}</small>}
            </MetricValue>
            <MetricLabel>{m.label}</MetricLabel>
          </Metric>
        ))}
      </Summary>

      <InfoRow $line={1} $end={23}>
        <div>
          <h3>优秀</h3>
          <p>Running Index</p>
        </div>
        <strong>47</strong>
      </InfoRow>
      <InfoRow $line={2} $end={16}>
        <div>
          <h3>稳定状态与基本训练</h3>
          <p>训练效益</p>
        </div>
        <IconButton type="button" aria-label="训练效益">
          <svg width="17" height="14" viewBox="0 0 17 14">
            <path d="M0 0L17 7L0 14Z" />
          </svg>
        </IconButton>
      </InfoRow>

      <Section title="Training Load Pro" info="#777" flat />
      <LoadIntro>
        <IntroHead>
          什么是 Training Load Pro?
          <IconButton type="button" aria-label="关闭">
            <svg width="14" height="14" viewBox="0 0 14 14" stroke="currentColor" strokeWidth="1.5">
              <path d="M1 1L13 13M13 1L1 13" />
            </svg>
          </IconButton>
        </IntroHead>
        <IntroBody>
          <Heart width={15} height={15} filled />
          <IntroScore>
            123
            <LoadDots small color="#c8002d" />
          </IntroScore>
          <GrayText $line={21}>Training Load Pro 涵盖心肺负荷、肌肉负荷和感知负荷。</GrayText>
        </IntroBody>
        <GrayText>它有助您了解训练课如何令身体疲惫。</GrayText>
      </LoadIntro>

      {LOADS.map((load) => (
        <LoadRow key={load.name}>
          <LoadIcon>{load.icon}</LoadIcon>
          <LoadName>
            中等
            <p>{load.name}</p>
          </LoadName>
          <LoadScore>
            <div>
              <strong>{load.score}</strong>
              {load.outOf}
            </div>
            {load.color && <LoadDots color={load.color} />}
          </LoadScore>
          {load.more && (
            <MoreButton type="button" aria-label="更多">
              <span />
              <span />
              <span />
            </MoreButton>
          )}
        </LoadRow>
      ))}

      <Section title="训练区" />
      <Zones>
        <Tabs>
          {['心率', '步速', '功率'].map((name) => (
            <Tab key={name} type="button" $active={tab === name} onClick={() => setTab(name)}>
              {name}
            </Tab>
          ))}
        </Tabs>
        <HeartRateChart />
        <ZoneTable>
          <tbody>
            {ZONES.map((z) => (
              <tr key={z.zone}>
                <th scope="row">
                  <ZoneLabel $color={z.color}>{z.zone}</ZoneLabel>
                </th>
                <td>
                  <ZoneBar $color={z.color} style={{ width: `${z.width}%` }} />
                </td>
                <td>{z.time}</td>
              </tr>
            ))}
          </tbody>
        </ZoneTable>
      </Zones>

      <Section title="能量来源" info="#000" accent />
      <Energy>
        <EnergyTotal>
          <FlameColor />
          <strong>365</strong>
          <span>千卡</span>
        </EnergyTotal>
        <Nutrient>卡路里</Nutrient>
        <EnergyBar>
          {NUTRIENTS.map((n) => (
            <EnergyPart key={n.name} $color={n.color} style={{ flex: n.pct }} />
          ))}
        </EnergyBar>
        <Nutrients>
          {NUTRIENTS.map((n) => (
            <Nutrient key={n.name}>
              <StripedFlame color={n.flame} />
              <strong>{n.pct}%</strong>
              {n.name}
            </Nutrient>
          ))}
        </Nutrients>
      </Energy>
      <EnergyUse />

      <Section title="路线" />
      <RouteMap />

      <LapTable>
        <colgroup>
          <col width="22%" />
          <col width="23%" />
          <col width="18%" />
          <col width="19%" />
          <col width="18%" />
        </colgroup>
        <thead>
          <tr>
            <th scope="col">自动计圈</th>
            <th scope="col"><Stopwatch width={21} height={24} stroke={9} /></th>
            <th scope="col"><Ruler width={26} height={24} stroke={2} /></th>
            <th scope="col"><Heart width={19} height={22} filled /></th>
            <th scope="col"><Gauge width={23} height={20} stroke={9} /></th>
          </tr>
        </thead>
        <tbody>
          {LAPS.map(([name, ...cells]) => (
            <tr key={name}>
              <th scope="row">{name}</th>
              {cells.map((cell, i) => (
                <td key={i}>{cell}</td>
              ))}
            </tr>
          ))}
        </tbody>
      </LapTable>

      <Section title="训练课反馈" />
      <Feedback>
        <FeedbackLabel as="div">您感觉如何?</FeedbackLabel>
        <Faces>
          {MOODS.map((name) => (
            <IconButton
              key={name}
              type="button"
              aria-label={name}
              aria-pressed={mood === name}
              $color={mood === name ? '#c00026' : '#929497'}
              onClick={() => setMood(name)}
            >
              <Face mood={name} />
            </IconButton>
          ))}
        </Faces>
        <FeedbackLabel htmlFor="note">训练笔记</FeedbackLabel>
        <NoteInput id="note" type="text" placeholder="添加训练笔记" />
        <AskRow>
          总是询问
          <Switch type="checkbox" checked={alwaysAsk} onChange={(e) => setAlwaysAsk(e.target.checked)} />
        </AskRow>
      </Feedback>

      <NavBar>
        <IconButton type="button" aria-label="最近任务" $color="#888">
          <svg width="14" height="15" viewBox="0 0 14 15" stroke="currentColor">
            <path d="M0 1H14M0 7.5H14M0 14H14" />
          </svg>
        </IconButton>
        <IconButton type="button" aria-label="主页" $color="#888">
          <svg width="14" height="14" viewBox="0 0 14 14" fill="none" stroke="currentColor">
            <rect x="0.5" y="0.5" width="13" height="13" rx="3" />
          </svg>
        </IconButton>
        <IconButton type="button" aria-label="后退" $color="#888">
          <svg width="14" height="14" viewBox="0 0 14 14" fill="none" stroke="currentColor" strokeLinejoin="round">
            <path d="M13 1V13L1 7Z" />
          </svg>
        </IconButton>
      </NavBar>
    </>
  );
}

export default App;
